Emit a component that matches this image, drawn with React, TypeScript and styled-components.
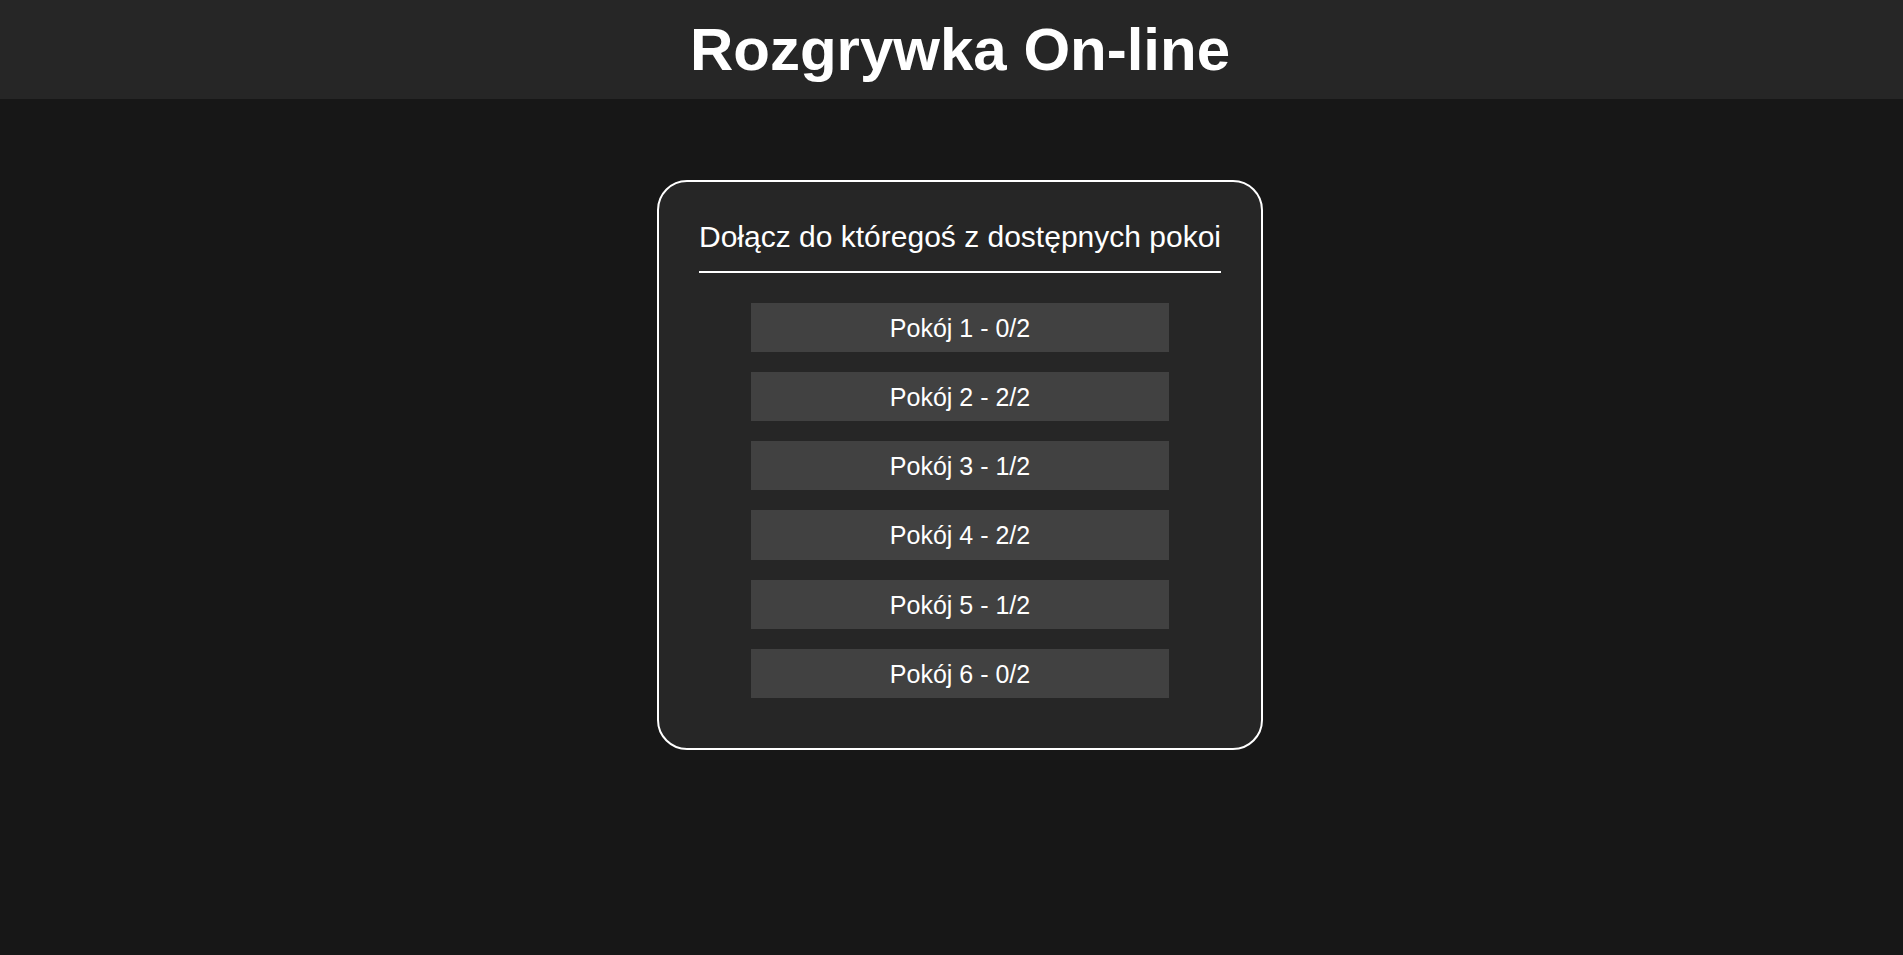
import React from 'react';
import styled, { createGlobalStyle } from 'styled-components';

const rooms = [
  { id: 1, players: 0 },
  { id: 2, players: 2 },
  { id: 3, players: 1 },
  { id: 4, players: 2 },
  { id: 5, players: 1 },
  { id: 6, players: 0 },
];

const GlobalStyle = createGlobalStyle`
  html, body {
    margin: 0;
    padding: 0;
    background-color: #171717;
    font-family: 'Liberation Sans', Arial, sans-serif;
    color: #ffffff;
  }
  body {
    min-height: 100vh;
  }
`;

const Header = styled.header`
  background-color: #262626;
  padding: 15px 0 15px 17px;
  text-align: center;
`;

const Title = styled.h1`
  margin: 0;
  font-size: 60px;
  font-weight: 700;
  line-height: normal;
`;

const Main = styled.main`
  display: flex;
  justify-content: center;
  padding: 81px 0 0 17px;
`;

const Card = styled.section`
  width: fit-content;
  padding: 38px 40px 50px;
  background-color: #262626;
  border: 2px solid #ffffff;
  border-radius: 30px;
  display: flex;
  flex-direction: column;
  align-items: center;
`;

const Heading = styled.h2`
  margin: 0;
  padding-bottom: 16.5px;
  font-size: 30px;
  font-weight: 400;
  line-height: normal;
  white-space: nowrap;
  border-bottom: 2px solid #ffffff;
`;

const RoomList = styled.div`
  margin-top: 30px;
  width: 80%;
  display: flex;
  flex-direction: column;
  gap: 20px;
`;

const RoomButton = styled.button<{ full: boolean }>`
  padding: 11px 10px 9.25px;
  border: none;
  background-color: #414141;
  color: #ffffff;
  font-family: inherit;
  font-size: 25px;
  line-height: normal;
  text-align: center;
  cursor: ${(props) => (props.full ? 'not-allowed' : 'pointer')};
`;

export default function App() {
  return (
    <>
      <GlobalStyle />
      <Header>
        <Title>Rozgrywka On-line</Title>
      </Header>
      <Main>
        <Card>
          <Heading>Dołącz do któregoś z dostępnych pokoi</Heading>
          <RoomList>
            {rooms.map((room) => (
              <RoomButton key={room.id} full={room.players >= 2}>
                Pokój {room.id} - {room.players}/2
              </RoomButton>
            ))}
          </RoomList>
        </Card>
      </Main>
    </>
  );
}
